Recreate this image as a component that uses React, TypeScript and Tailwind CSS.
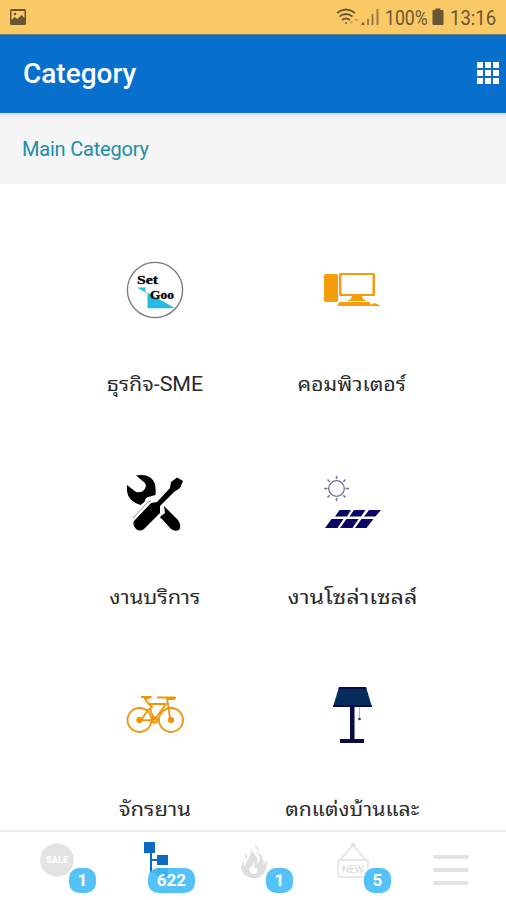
import React from 'react';

interface Category {
  label: string;
  icon: React.ReactNode;
  className: string;
}

const SetGooLogo = () => (
  <svg viewBox="0 0 58 58" className="w-[58px] h-[58px]">
    <circle cx="29" cy="29" r="27.6" fill="#fff" stroke="#777" strokeWidth="1.3" />
    <path d="M11 26.5h8.5v5zM21.5 31.5 49 47.3H21.5z" fill="#24bbe4" />
    <path d="M19.5 26v7h3" fill="none" stroke="#9de1f3" strokeWidth="1" />
    <text x="11" y="23" fontFamily="Liberation Serif, serif" fontSize="11.5" fontWeight="700" stroke="#000" strokeWidth=".3" textLength="21" lengthAdjust="spacingAndGlyphs">Set</text>
    <text x="24" y="38" fontFamily="Liberation Serif, serif" fontSize="11.5" fontWeight="700" stroke="#000" strokeWidth=".3" textLength="24" lengthAdjust="spacingAndGlyphs">Goo</text>
  </svg>
);

const ComputerIcon = () => (
  <svg viewBox="0 0 58 58" className="w-[58px] h-[58px]" fill="#f59c0b">
    <rect x="1" y="13" width="14" height="28" rx="1.5" />
    <path fillRule="evenodd" d="M17.500 12h33q1.500 0 1.500 1.500v20q0 1.500-1.500 1.500h-33q-1.500 0-1.500-1.500v-20q0-1.500 1.500-1.500zm1 2v19h31V14z" />
    <path d="M29 35h10l1 3 4 2H24l4-2zM17 41h29l2.500 2.500V45H15v-2.500z" />
    <path d="M49 42.500h4l4 2v.8h-2l-2-.4h-4z" />
  </svg>
);

const ToolsIcon = () => (
  <svg viewBox="0 0 58 58" className="w-[58px] h-[58px]" fill="#000">
    <path d="M10 1.500Q25-1 29 10q1 6 .5 11-4 1-7 2-3 0-4 5l-4 3Q2 27 1 17L1 11l9 7q6 1 8-2 3-3 1-7z" />
    <path d="M51 3.500 57 7l-3 7-6 4-14 14v7L18 55q-4 3-8 0-4-4-2-8l17-18 6-1 13-14 1-6z" />
    <path d="m38 32 3 3 11 11q4 6 1 10-4 2-8-1l-9-10q-3-1-1-3l4-3z" />
    <path d="m7 44 15-16 3-1" fill="none" stroke="#777" strokeWidth=".8" />
  </svg>
);

const SolarIcon = () => (
  <svg viewBox="0 0 58 58" className="w-[58px] h-[58px]">
    <g fill="none" stroke="#6d749e">
      <circle cx="13.500" cy="14.500" r="7.800" strokeWidth="1.300" />
      <path d="M13.500 2v3M13.500 24v3M1 14.500h3.500M22.500 14.500H26M4.500 5.500l2.200 2.200M20.300 21.300l2.200 2.200M4.500 23.500l2.200-2.200M20.300 7.700l2.200-2.200" strokeWidth="1.500" />
    </g>
    <g fill="#080765">
      <path d="M16.500 36h11.500l-4 6.500H12zM31 36h11.500l-4.500 6.500H26.500zM46 36h12l-5.500 6.500H41zM8.500 45h12l-6 9H2zM23.500 45h12l-6 9H17zM38.500 45h12l-7 9H32z" />
    </g>
  </svg>
);

const BicycleIcon = () => (
  <svg viewBox="0 0 58 58" className="w-[58px] h-[58px]" fill="none" stroke="#ee950c">
    <circle cx="13.500" cy="34" r="12" strokeWidth="1.800" />
    <circle cx="45" cy="34" r="12" strokeWidth="1.800" />
    <path d="M15 11h10l-5 2-2-1M19 13l3 4 4 4-4 3-7 10 13 .5L40 18H22M24 22l4 12M41 12l3 20M31 11.500h18q1 1.500-2 1.500h-6" strokeWidth="1.800" strokeLinejoin="round" />
    <circle cx="28.500" cy="34" r="2.800" strokeWidth="2" />
    <circle cx="13.500" cy="34" r="2.800" fill="#ee950c" />
    <circle cx="45" cy="34" r="2.800" fill="#ee950c" />
  </svg>
);

const LampIcon = () => (
  <svg viewBox="0 0 58 58" className="w-[58px] h-[58px]">
    <path d="M16 1h27l6 20H10z" fill="#052c5b" />
    <path d="M16 1h27l.5 2h-28zM10.500 19h38l.5 2H10z" fill="#090b45" />
    <path d="M27 21h4.500v32H41v4H17v-4h10z" fill="#090b45" />
    <path d="M36.500 21v11" stroke="#b4b6cb" strokeWidth="1" />
    <circle cx="36.500" cy="33" r="1.300" fill="#252b60" />
  </svg>
);

const categories: Category[] = [
  { label: 'ธุรกิจ-SME', icon: <SetGooLogo />, className: 'scale-x-[1.07]' },
  { label: 'คอมพิวเตอร์', icon: <ComputerIcon />, className: 'scale-x-[1.07]' },
  { label: 'งานบริการ', icon: <ToolsIcon />, className: 'scale-x-[1.09]' },
  { label: 'งานโซล่าเซลล์', icon: <SolarIcon />, className: 'scale-x-[1.17]' },
  { label: 'จักรยาน', icon: <BicycleIcon />, className: 'scale-x-[1.1]' },
  { label: 'ตกแต่งบ้านและ', icon: <LampIcon />, className: 'scale-x-[1.06]' },
];

const StatusBar = () => (
  <div className="h-[34px] shrink-0 bg-[#f9c966] flex items-center justify-between pl-[9px] pr-[9px] text-[#685635]">
    <svg viewBox="0 0 18 18" className="w-[18px] h-[18px]">
      <path fillRule="evenodd" fill="currentColor" d="M2.500 1h13Q17 1 17 2.500v13q0 1.500-1.500 1.500h-13Q1 17 1 15.500v-13Q1 1 2.500 1zm0 2v9l3-3 3 2 4-4 3 3V3z" />
      <circle cx="6" cy="6" r="1.300" fill="currentColor" />
    </svg>
    <div className="flex items-center h-full pt-[2px]">
      <svg viewBox="0 0 44 20" className="w-[44px] h-5 mr-[5px] -mt-[2px]" fill="none" stroke="currentColor">
        <path d="M1 6q9-7 18 0M3.500 9.500q6.500-5 13 0M6 13q4-3 8 0" strokeWidth="1.800" />
        <circle cx="10" cy="16" r="1" fill="currentColor" stroke="none" />
        <path d="M14 15.500h2.500M19 13h2.500" strokeWidth="2" opacity=".4" />
        <path d="M27 18v-2.500" strokeWidth="2.500" />
        <path d="M32 18v-6M36.500 18V7M41.500 18V2" strokeWidth="2" opacity=".65" />
      </svg>
      <span className="w-[47px] text-[21px] leading-none origin-left scale-x-[.84] whitespace-nowrap">100%</span>
      <svg viewBox="0 0 12 18" className="w-3 h-[18px] mr-[6px] -mt-[2px]" fill="currentColor">
        <path d="M3.500.5h5V2H11q.5 0 .5 1v13q0 1-1 1h-9q-1 0-1-1V3q0-1 .5-1h2.500z" />
      </svg>
      <span className="w-[47px] text-[21px] leading-none origin-left scale-x-[.88] whitespace-nowrap">13:16</span>
    </div>
  </div>
);

const Badge = ({ count, className }: { count: number; className: string }) => (
  <span className={`absolute h-[25px] rounded-[10px] bg-[#42bbf6]/90 text-white text-[17px] font-bold flex items-center justify-center ${className}`}>
    {count}
  </span>
);

const BottomNav = () => (
  <nav className="h-[70px] shrink-0 border-t-2 border-[#ececec] bg-white grid grid-cols-5 px-[8px]">
    <div className="relative">
      <svg viewBox="0 0 34 34" className="absolute left-[32px] top-[11px] w-[34px] h-[34px]">
        <circle cx="17" cy="17" r="16.800" fill="#e3e3e3" />
        <text x="6" y="20" fontFamily="Roboto, sans-serif" fontSize="9" fontWeight="900" fill="#fff" textLength="22">SALE</text>
      </svg>
      <Badge count={1} className="left-[61px] top-[36px] w-[27px]" />
    </div>
    <div className="relative">
      <svg viewBox="0 0 24 36" className="absolute left-[38px] top-[10px] w-6 h-9" fill="#0c6ac5">
        <path d="M0 0h11v11H8v6h5v-4h11v10H13v-4H8v10h5v-3h11v9H13v-4H6V11H0z" />
      </svg>
      <Badge count={622} className="left-[42px] top-[36px] w-[47px] bg-[#42bbf6]/80" />
    </div>
    <div className="relative">
      <svg viewBox="0 0 28 36" className="absolute left-[36px] top-[10px] w-7 h-9" fill="#dedede">
        <path d="M11 4q0 5 4 9 4 4 2 9 3-2 3-6-1-4-4-7 6 3 7 9 1 3 0 5 2-2 4-5 0 12-6 16-4 3-9 2Q2 34 1 26q0-4 3-8-1 4 1 6 1-4 4-8 3-5 2-12z" />
        <path d="M5 11q3 2 2 5-2 1-3 0 2-2 1-5zM15 1q0 3 3 5 1 1 1 3-5-3-4-8z" />
        <path d="M14 20q-1 4-4 6-2 4 3 6 6 0 4-6l-2 1q0-4-1-7z" fill="#fff" />
      </svg>
      <Badge count={1} className="left-[62px] top-[36px] w-[27px]" />
    </div>
    <div className="relative">
      <svg viewBox="0 0 32 37" className="absolute left-[35px] top-[10px] w-8 h-[37px]" fill="none" stroke="#dedede" strokeWidth="1.300">
        <path d="M3 18 16 3l13 15" />
        <circle cx="16" cy="3" r="1.500" />
        <rect x="1" y="18" width="30" height="17" rx="2" />
        <text x="5" y="30.500" fontFamily="Roboto, sans-serif" fontSize="10.500" fontWeight="500" fill="#dedede" stroke="none" textLength="22">NEW</text>
      </svg>
      <Badge count={5} className="left-[62px] top-[36px] w-[27px]" />
    </div>
    <div className="pt-[23px] pl-[33px]">
      <div className="w-9 flex flex-col gap-[9px]">
        <span className="h-[4px] rounded-sm bg-[#e3e3e3]" />
        <span className="h-[4px] rounded-sm bg-[#e3e3e3]" />
        <span className="h-[4px] rounded-sm bg-[#e3e3e3]" />
      </div>
    </div>
  </nav>
);

const App: React.FC = () => {
  return (
    <div className="h-[900px] w-[506px] bg-white overflow-hidden flex flex-col font-[Roboto,'Noto_Sans_Thai_Looped','Loma','Waree','Garuda',sans-serif]">
      <StatusBar />

      {/* Header */}
      <header className="h-[79px] shrink-0 bg-[#0770cd] border-t border-[#777c72] flex items-center justify-between pl-[23px] pr-[7px] text-white">
        <h1 className="text-[28px] font-medium">Category</h1>
        <div className="grid grid-cols-3 gap-[2px] -mt-[2px]">
          {Array.from({ length: 9 }, (_, i) => (
            <span key={i} className="w-[6px] h-[6px] bg-white" />
          ))}
        </div>
      </header>

      <div className="h-[71px] shrink-0 bg-[linear-gradient(#d4d8de,#ededed_3px,#f5f5f5_7px)] pl-[22px] flex items-center text-[20px] tracking-[-0.2px] text-[#218da8]">
        Main Category
      </div>

      {/* Category grid */}
      <main className="flex-1 min-h-0 overflow-hidden grid grid-cols-2 auto-rows-[212.5px] content-start pl-[56px] pr-[56px] pt-[77px]">
        {categories.map((category) => (
          <div key={category.label} className="flex flex-col items-center">
            {category.icon}
            <span className={`mt-[50px] ml-px text-[20px] leading-[30px] whitespace-nowrap text-[#2b2b2b] ${category.className}`}>
              {category.label}
            </span>
          </div>
        ))}
      </main>

      <BottomNav />
    </div>
  );
};

export default App;
